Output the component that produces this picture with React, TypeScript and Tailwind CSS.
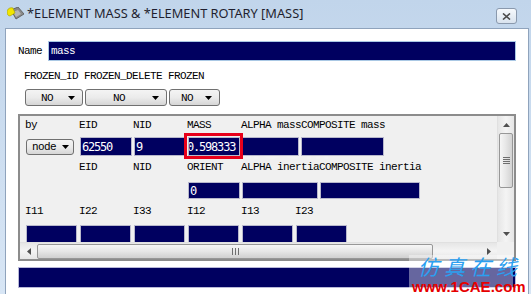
import React from "react";

const mono = { fontFamily: '"Liberation Mono", "DejaVu Sans Mono", monospace' };
const valFont = { fontFamily: '"DejaVu Sans Mono", "Liberation Mono", monospace' };

function Field({ w, value, h = 18, ml = 0, shift = 0 }: { w: number; value?: string; h?: number; ml?: number; shift?: number }) {
  return (
    <div
      className="shrink-0 bg-[#000060] border border-[#b8b8cc] overflow-hidden flex items-center text-white text-[12px] tracking-[-1.2px] leading-none"
      style={{ width: w, height: h, marginLeft: ml, ...valFont }}
    >
      {value !== undefined && <span className="whitespace-nowrap" style={{ marginLeft: 1 + shift }}>{value}</span>}
    </div>
  );
}

function Drop({ w, label, textLeft, arrowRight = 7, h = 17, ml = 0 }: { w: number; label: string; textLeft: number; arrowRight?: number; h?: number; ml?: number }) {
  return (
    <div
      className="shrink-0 relative rounded-[3px] border border-[#707070] bg-gradient-to-b from-[#f4f4f4] via-[#ebebeb] to-[#d6d6d6] text-[11px] tracking-[-0.6px] text-black leading-none"
      style={{ width: w, height: h, marginLeft: ml, ...mono }}
    >
      <span className="absolute top-1/2 -translate-y-1/2" style={{ left: textLeft }}>{label}</span>
      <svg className="absolute top-1/2 -translate-y-1/2" style={{ right: arrowRight }} width="7" height="4" viewBox="0 0 7 4">
        <path d="M0 0 H7 L3.5 4 Z" fill="#000" />
      </svg>
    </div>
  );
}

function Label({ children, className = "" }: { children: React.ReactNode; className?: string }) {
  return (
    <div className={"h-[12px] text-[11px] tracking-[-0.6px] leading-[12px] text-black whitespace-nowrap " + className} style={mono}>
      {children}
    </div>
  );
}

export default function App() {
  return (
    <div className="w-[531px] h-[294px] overflow-hidden relative flex flex-col bg-gradient-to-b from-[#c1d5eb] to-[#d8e6f5]">
      {/* Title bar */}
      <div className="h-[28px] shrink-0 flex items-center pl-[7px] pr-[14px]">
        <svg width="17" height="15" viewBox="0 0 17 15" className="shrink-0">
          <path d="M4 3 L11 0 L17 7 L9 12 Z" fill="#8a8a8a" stroke="#555" strokeWidth="0.8" />
          <path d="M6 5 L11 3 L14 7 L9 10 Z" fill="#b5b5b5" />
          <path d="M0 5 C0 2 3 0 6 1 L8 6 L3 9 C1 9 0 7 0 5 Z" fill="#f2e600" stroke="#a09a00" strokeWidth="0.6" />
        </svg>
        <div
          className="ml-[3px] flex-1 text-[12.8px] text-[#1f1f2f] whitespace-nowrap"
          style={{ fontFamily: '"Noto Sans", "Open Sans", sans-serif' }}
        >
          *ELEMENT MASS &amp; *ELEMENT ROTARY [MASS]
        </div>
        <div className="w-[21px] h-[16px] mt-[4px] rounded-[3px] border border-[#8a99ad] bg-gradient-to-b from-[#f6f9fc] to-[#d9e3ee] flex items-center justify-center">
          <svg width="9" height="7" viewBox="0 0 9 7">
            <path d="M1 0.5 L8 6.5 M8 0.5 L1 6.5" stroke="#4a4a4a" strokeWidth="1.6" />
          </svg>
        </div>
      </div>

      {/* Client */}
      <div className="flex-1 flex pl-[5px] pr-[2px]">
        <div className="flex-1 bg-white border-l border-t border-r border-[#8fa3bc] pl-[12px] pr-[12px] flex flex-col">
          {/* Name row */}
          <div className="mt-[12px] h-[20px] flex items-center">
            <div className="w-[30px] text-[11px] tracking-[-0.6px] text-black" style={mono}>Name</div>
            <div className="flex-1 h-[20px] bg-[#000060] border border-[#aac8e4] flex items-center">
              <span className="ml-[2px] text-white text-[11px] tracking-[-0.6px]" style={mono}>mass</span>
            </div>
          </div>

          <Label className="mt-[9px] pl-[6px]">FROZEN_ID FROZEN_DELETE FROZEN</Label>

          <div className="mt-[7px] flex ml-[7px]">
            <Drop w={58} label="NO" textLeft={15} />
            <Drop w={82} label="NO" textLeft={27} ml={2} />
            <Drop w={51} label="NO" textLeft={11} ml={2} />
          </div>

          {/* Panel */}
          <div className="mt-[8px] h-[147px] border-2 border-[#8c8c8c] bg-[#f0f0f0] flex flex-col relative">
            <div className="flex-1 flex min-h-0">
              {/* content */}
              <div className="flex-1 overflow-hidden pl-[5px] relative">
                <div
                  className="absolute left-[152px] top-[10px] text-[30px] font-bold text-white/20 whitespace-nowrap pointer-events-none"
                  style={{ fontFamily: '"Liberation Sans", Arial, sans-serif' }}
                >
                  1CAE.COM
                </div>
                <div className="relative mt-[3px] flex">
                  <Label className="w-[54px]">by</Label>
                  <Label className="w-[54px]">EID</Label>
                  <Label className="w-[54px]">NID</Label>
                  <Label className="w-[54px]">MASS</Label>
                  <Label>ALPHA massCOMPOSITE mass</Label>
                </div>
                <div className="relative mt-[6px] h-[19px] flex items-center">
                  <Drop w={48} h={16} label="node" textLeft={5} arrowRight={4} ml={1} />
                  <Field w={52} value="62550" ml={6} h={19} />
                  <Field w={52} value="9" ml={2} h={19} />
                  <div className="relative shrink-0 ml-[2px]">
                    <Field w={52} value="0.598333" h={19} shift={-3} />
                    <div className="absolute -left-[4px] -top-[4px] -right-[3px] -bottom-[3px] border-[3px] border-[#e8001a]" />
                  </div>
                  <Field w={57} ml={2} h={19} />
                  <Field w={83} ml={2} h={19} />
                </div>
                <div className="relative mt-[5px] flex">
                  <div className="w-[54px]" />
                  <Label className="w-[54px]">EID</Label>
                  <Label className="w-[54px]">NID</Label>
                  <Label className="w-[54px]">ORIENT</Label>
                  <Label>ALPHA inertiaCOMPOSITE inertia</Label>
                </div>
                <div className="relative mt-[9px] flex">
                  <Field w={52} value="0" ml={163} h={17} />
                  <Field w={76} ml={2} h={17} />
                  <Field w={100} ml={2} h={17} />
                </div>
                <div className="relative mt-[6px] flex">
                  <Label className="w-[54px]">I11</Label>
                  <Label className="w-[54px]">I22</Label>
                  <Label className="w-[54px]">I33</Label>
                  <Label className="w-[54px]">I12</Label>
                  <Label className="w-[54px]">I13</Label>
                  <Label className="w-[54px]">I23</Label>
                </div>
                <div className="relative mt-[8px] flex">
                  <Field w={51} ml={1} h={18} />
                  <Field w={51} ml={3} h={18} />
                  <Field w={51} ml={3} h={18} />
                  <Field w={51} ml={3} h={18} />
                  <Field w={51} ml={3} h={18} />
                  <Field w={51} ml={3} h={18} />
                </div>
              </div>
              {/* vertical scrollbar */}
              <div className="w-[17px] flex flex-col bg-gradient-to-r from-[#e6e6e6] via-[#f4f4f4] to-[#e6e6e6] border-l border-[#e0e0e0]">
                <div className="h-[17px] flex items-center justify-center">
                  <svg width="7" height="4" viewBox="0 0 7 4"><path d="M0 4 H7 L3.5 0 Z" fill="#505050" /></svg>
                </div>
                <div className="mx-[1px] h-[55px] rounded-[2px] border border-[#979797] bg-gradient-to-r from-[#f6f6f6] via-[#e6e6e6] to-[#d2d2d2] flex flex-col items-center justify-center gap-[1px]">
                  <div className="w-[7px] h-[1px] bg-[#6e6e6e]" />
                  <div className="w-[7px] h-[1px] bg-[#6e6e6e]" />
                  <div className="w-[7px] h-[1px] bg-[#6e6e6e]" />
                  <div className="w-[7px] h-[1px] bg-[#6e6e6e]" />
                </div>
                <div className="flex-1" />
                <div className="h-[17px] flex items-center justify-center">
                  <svg width="7" height="4" viewBox="0 0 7 4"><path d="M0 0 H7 L3.5 4 Z" fill="#505050" /></svg>
                </div>
              </div>
            </div>
            {/* horizontal scrollbar */}
            <div className="h-[17px] flex">
              <div className="flex-1 flex items-center bg-gradient-to-b from-[#e6e6e6] via-[#f4f4f4] to-[#e6e6e6] border-t border-[#e0e0e0]">
                <div className="w-[17px] h-full flex items-center justify-center">
                  <svg width="4" height="7" viewBox="0 0 4 7"><path d="M4 0 V7 L0 3.5 Z" fill="#505050" /></svg>
                </div>
                <div className="w-[396px] h-[15px] rounded-[2px] border border-[#979797] bg-gradient-to-b from-[#f6f6f6] via-[#e6e6e6] to-[#d0d0d0] flex items-center justify-center gap-[1px]">
                  <div className="w-[1px] h-[7px] bg-[#6e6e6e]" />
                  <div className="w-[1px] h-[7px] bg-[#6e6e6e] ml-[1px]" />
                  <div className="w-[1px] h-[7px] bg-[#6e6e6e] ml-[1px]" />
                </div>
                <div className="flex-1" />
                <div className="w-[17px] h-full flex items-center justify-center">
                  <svg width="4" height="7" viewBox="0 0 4 7"><path d="M0 0 V7 L4 3.5 Z" fill="#505050" /></svg>
                </div>
              </div>
              <div className="w-[17px] bg-[#f0f0f0]" />
            </div>
          </div>

          {/* bottom field */}
          <div className="mt-[6px] h-[21px] bg-[#000060] border border-[#b8b8d8]" />
        </div>
      </div>

      {/* watermark */}
      <div className="absolute left-[409px] top-[255px] w-[104px] h-[39px] bg-white/40 pointer-events-none" />
      <div
        className="absolute left-[418px] top-[253px] text-[21px] leading-[26px] tracking-[5px] text-[#2b9ff0] whitespace-nowrap italic pointer-events-none"
        style={{ fontFamily: '"Noto Sans CJK SC", sans-serif' }}
      >
        仿真在线
      </div>
      <div
        className="absolute left-[412px] top-[278px] text-[15px] leading-[17px] font-bold text-[#e60000] whitespace-nowrap pointer-events-none"
        style={{ fontFamily: '"Liberation Sans", Arial, sans-serif' }}
      >
        www.1CAE.com
      </div>
    </div>
  );
}
